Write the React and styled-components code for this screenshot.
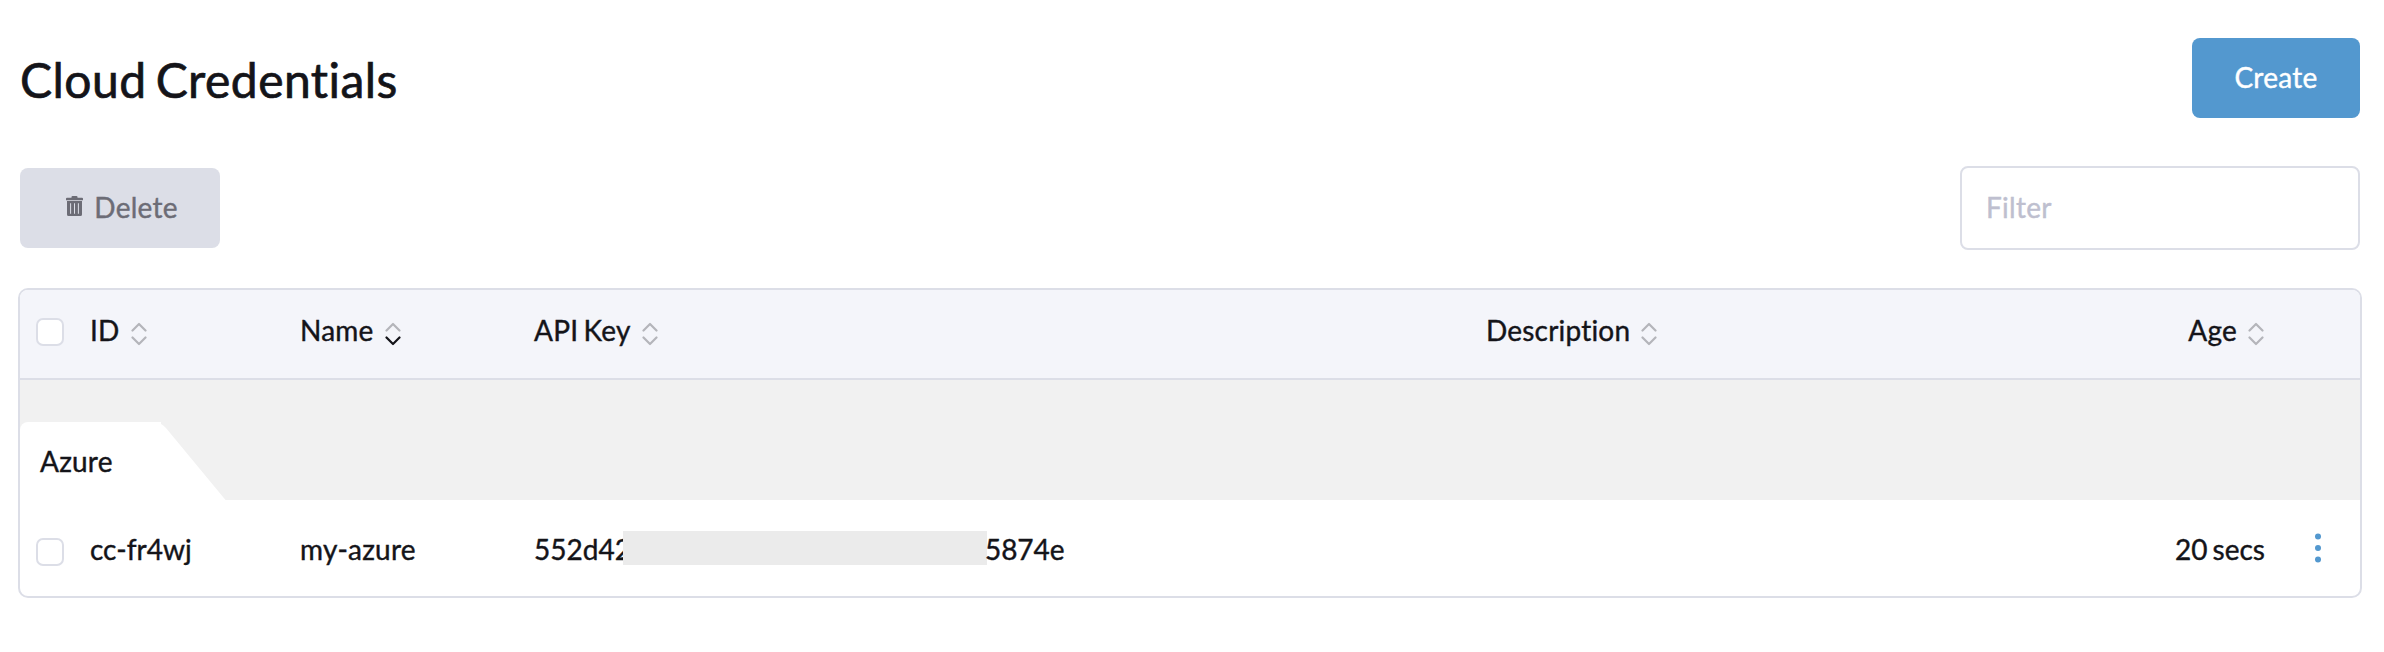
import React from "react";
import styled, { createGlobalStyle } from "styled-components";

const GlobalStyle = createGlobalStyle`
  *, *::before, *::after { box-sizing: border-box; }
  body {
    margin: 0;
    background: #fff;
    color: #141419;
    font-family: Lato, "Liberation Sans", sans-serif;
    font-size: 28px;
    line-height: 34px;
    letter-spacing: 0.2px;
    word-spacing: -2px;
    font-variant-ligatures: none;
    -webkit-text-stroke: 0.4px currentColor;
  }
`;

const Page = styled.main`
  padding: 38px 22px 54px 18px;
`;

const Header = styled.header`
  display: flex;
  align-items: center;
  justify-content: space-between;
  height: 80px;
  padding: 0 2px;
`;

const Title = styled.h1`
  margin: 4px 0 0;
  font-size: 48px;
  font-weight: 400;
  line-height: 58px;
  letter-spacing: 0.45px;
  word-spacing: -3.5px;
  -webkit-text-stroke-width: 0.7px;
`;

const Toolbar = styled.div`
  display: flex;
  align-items: center;
  justify-content: space-between;
  height: 84px;
  margin: 48px 0 38px;
  padding: 0 2px;
`;

const Button = styled.button`
  display: flex;
  align-items: center;
  justify-content: center;
  gap: 11px;
  width: ${(p) => p.$width}px;
  height: 80px;
  padding: 0 0 2px ${(p) => p.$indent || 0}px;
  border: 0;
  border-radius: 8px;
  font: inherit;
  letter-spacing: 0.25px;
  font-variant-ligatures: none;
  color: ${(p) => (p.$primary ? "#fff" : "#6c6c76")};
  background: ${(p) => (p.$primary ? "#5398cf" : "#dcdee7")};
`;

const FilterInput = styled.input`
  width: 400px;
  height: 84px;
  padding: 0 24px 2px;
  border: 2px solid #dcdee7;
  border-radius: 8px;
  font: inherit;
  letter-spacing: 0.3px;
  outline: none;
  &::placeholder { color: #bebfcf; opacity: 1; }
`;

const TrashSvg = styled.svg`
  width: 17px;
  height: 20px;
  margin-bottom: 3px;
`;

const Table = styled.section`
  width: 2344px;
  border: 2px solid #dcdee7;
  border-radius: 10px;
  overflow: hidden;
`;

const Row = styled.div`
  display: grid;
  grid-template-columns: 70px 210px 234px 952px 500px 279px 95px;
  align-items: center;
  height: 96px;
`;

const HeadRow = styled(Row)`
  height: 90px;
  padding-bottom: 8px;
  background: #f4f5fa;
  border-bottom: 2px solid #dcdee7;
`;

const Cell = styled.div`
  display: flex;
  align-items: center;
  justify-content: ${(p) => (p.$end ? "flex-end" : "flex-start")};
  padding-top: ${(p) => p.$drop || 0}px;
  letter-spacing: ${(p) => (p.$tight ? "0" : "inherit")};
  white-space: pre;
`;

const HeadCell = styled(Cell)`
  gap: 11px;
  padding-right: ${(p) => (p.$end ? 1 : 0)}px;
`;

const Checkbox = styled.span`
  width: 28px;
  height: 28px;
  margin: ${(p) => p.$drop}px 0 0 16px;
  border: 2px solid #dcdee7;
  border-radius: 7px;
  background: #fff;
`;

const SortSvg = styled.svg`
  width: 16px;
  height: 24px;
  margin-top: 8px;
`;

const GroupRow = styled.div`
  height: 120px;
  padding-top: 42px;
  background: #f1f1f1;
`;

const GroupTab = styled.div`
  position: relative;
  display: flex;
  align-items: center;
  width: 141px;
  height: 78px;
  padding-left: 20px;
  border-radius: 8px 0 0 0;
  background: #fff;
  &::after {
    content: "";
    position: absolute;
    top: 0;
    right: 0;
    width: 80px;
    height: 78px;
    border-top-right-radius: 6px;
    background: #fff;
    transform: skewX(39.6deg);
    transform-origin: top right;
  }
`;

const GroupName = styled.span`
  position: relative;
  z-index: 1;
`;

const Redaction = styled.span`
  position: relative;
  width: 364px;
  height: 34px;
  margin: -3px -2px 0 -8px;
  background: #ebebeb;
`;

const KeyTail = styled.span`
  position: relative;
`;

const MenuSvg = styled.svg`
  width: 8px;
  height: 32px;
  margin-left: 49px;
`;

function TrashIcon() {
  return (
    <TrashSvg viewBox="0 0 17 20" fill="#6c6c76">
      <path
        fillRule="evenodd"
        d="M5.5 1q0-1 1-1h4q1 0 1 1v.8H16q1 0 1 1v1.4H0V2.8q0-1 1-1h4.5zM1 5h15v13.5q0 1.5-1.5 1.5h-12Q1 20 1 18.5zM4.1 7.2v10.6h1V7.2zM8 7.2v10.6h1V7.2zM11.9 7.2v10.6h1V7.2z"
      />
    </TrashSvg>
  );
}

function SortIcon({ active }) {
  return (
    <SortSvg viewBox="0 0 16 24" fill="none" strokeWidth="2.2" strokeLinecap="round" strokeLinejoin="round">
      <path d="M1.5 8.5L8 2L14.5 8.5" stroke="#b4b5ba" />
      <path d="M1.5 15.5L8 22L14.5 15.5" stroke={active ? "#141419" : "#b4b5ba"} />
    </SortSvg>
  );
}

function SortableHead({ label, active, end }) {
  return (
    <HeadCell $end={end}>
      {label}
      <SortIcon active={active} />
    </HeadCell>
  );
}

export default function App() {
  return (
    <Page>
      <GlobalStyle />
      <Header>
        <Title>Cloud Credentials</Title>
        <Button $primary $width={168}>Create</Button>
      </Header>
      <Toolbar>
        <Button $width={200} $indent={4}>
          <TrashIcon />
          Delete
        </Button>
        <FilterInput placeholder="Filter" />
      </Toolbar>
      <Table>
        <HeadRow>
          <Cell><Checkbox $drop={4} /></Cell>
          <SortableHead label="ID" />
          <SortableHead label="Name" active />
          <SortableHead label="API Key" />
          <SortableHead label="Description" />
          <SortableHead label="Age" end />
        </HeadRow>
        <GroupRow>
          <GroupTab><GroupName>Azure</GroupName></GroupTab>
        </GroupRow>
        <Row>
          <Cell><Checkbox $drop={8} /></Cell>
          <Cell $drop={2} $tight>cc-fr4wj</Cell>
          <Cell $drop={2}>my-azure</Cell>
          <Cell $drop={2} $tight>552d42<Redaction /><KeyTail>5874e</KeyTail></Cell>
          <Cell />
          <Cell $end $drop={2} $tight>20 secs</Cell>
          <Cell>
            <MenuSvg viewBox="0 0 8 32" fill="#5398cf">
              <circle cx="4" cy="4.5" r="3" />
              <circle cx="4" cy="16" r="3" />
              <circle cx="4" cy="27.5" r="3" />
            </MenuSvg>
          </Cell>
        </Row>
      </Table>
    </Page>
  );
}
